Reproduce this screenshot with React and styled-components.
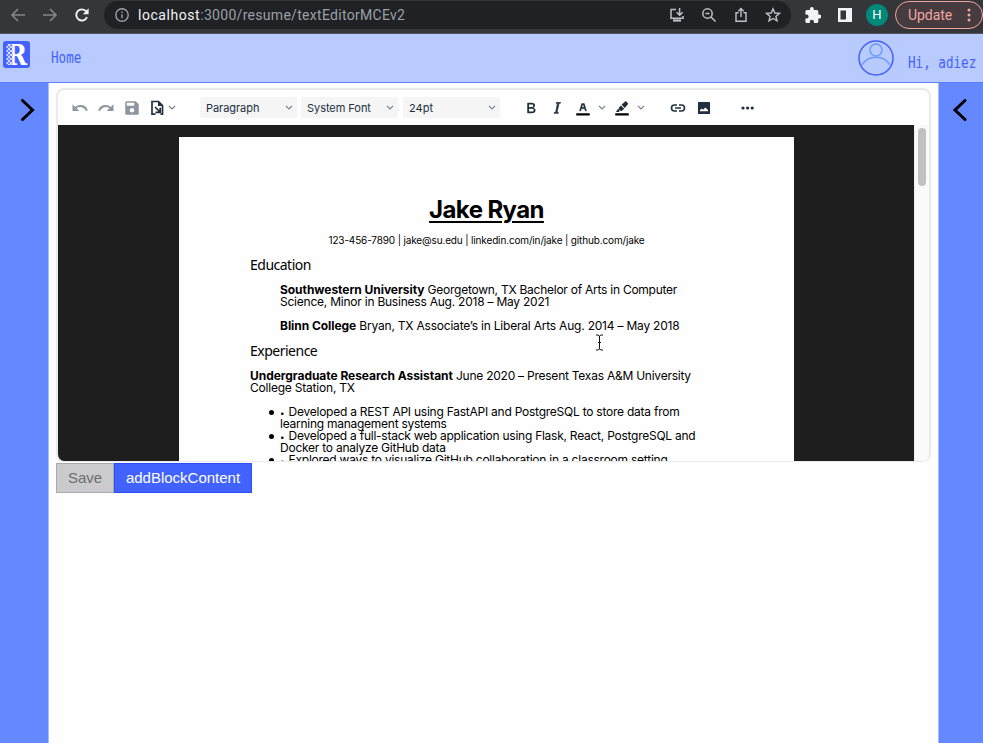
import React from "react";
import styled, { createGlobalStyle } from "styled-components";

const Global = createGlobalStyle`
  * { box-sizing: border-box; }
  html, body { margin: 0; padding: 0; overflow: hidden; }
  svg { display: block; flex: none; }
`;

const Window = styled.div`
  width: 983px;
  height: 743px;
  display: flex;
  flex-direction: column;
  background: #fefefe;
  overflow: hidden;
  font-family: Inter, sans-serif;
`;

/* Browser chrome */
const Chrome = styled.div`
  height: 34px;
  flex: none;
  display: flex;
  align-items: flex-start;
  background: #35363a;
  border-bottom: 1px solid #55565c;
`;
const NavIcons = styled.div`
  width: 104px;
  height: 30px;
  display: flex;
  align-items: center;
  gap: 16px;
  padding-left: 10px;
`;
const AddressBar = styled.div`
  width: 687px;
  height: 28px;
  margin-top: 1px;
  border-radius: 14px;
  background: #202124;
  display: flex;
  align-items: center;
  padding: 0 10px 0 10px;
`;
const Url = styled.div`
  flex: 1;
  margin-left: 8px;
  font: 14px/28px Roboto, sans-serif;
  letter-spacing: ${(p) => p.$ls}px;
  color: #9aa0a6;
  white-space: nowrap;
`;
const Host = styled.span`
  color: #f1f3f4;
  letter-spacing: 0.55px;
`;
const BarIcons = styled.div`
  display: flex;
  align-items: center;
  gap: 16px;
`;
const ChromeRight = styled.div`
  flex: 1;
  height: 30px;
  display: flex;
  align-items: center;
  padding-left: 14px;
`;
const Badge = styled.div`
  width: 22px;
  height: 22px;
  margin: 0 7px 0 14px;
  border-radius: 50%;
  background: #00897b;
  color: #fff;
  font: 13px/22px Roboto, sans-serif;
  text-align: center;
`;
const Update = styled.div`
  width: 88px;
  height: 28px;
  flex: none;
  display: flex;
  align-items: center;
  justify-content: space-between;
  padding: 0 11px 0 12px;
  border: 1px solid #f0a6a0;
  border-radius: 14px;
  background: #463c40;
  color: #f0a6a0;
  font: 14px Roboto, sans-serif;
  letter-spacing: -0.05px;
`;

/* Site header */
const Header = styled.header`
  height: 49px;
  flex: none;
  display: flex;
  align-items: flex-start;
  background: #b9caff;
  border-bottom: 1px solid #6080fa;
  padding: 7px 0 0 3px;
`;
const NavText = styled.div`
  width: ${(p) => p.$w}px;
  margin: ${(p) => p.$m};
  white-space: pre;
  font: 15px/18px "DejaVu Sans Mono", monospace;
  color: #4262ff;
  transform: scaleX(0.84);
  transform-origin: 0 0;
`;
const Spacer = styled.div`
  flex: 1;
`;
const UserIcon = styled.div`
  margin-top: -2px;
`;

/* Page body */
const Body = styled.div`
  flex: 1;
  display: flex;
  min-height: 0;
`;
const Side = styled.aside`
  width: ${(p) => p.$w}px;
  flex: none;
  background: #6488ff;
  border-${(p) => p.$edge}: 1px solid #a9bcff;
  padding: 16px 0 0 ${(p) => p.$pl}px;
`;
const Main = styled.main`
  flex: 1;
  padding: 5px 7px 0 7px;
`;
const Editor = styled.section`
  width: 875px;
  height: 374px;
  display: flex;
  flex-direction: column;
  border: 1px solid #eaeaea;
  border-width: 2px 2px 1px 2px;
  border-radius: 8px;
  overflow: hidden;
`;
const Toolbar = styled.div`
  height: 35px;
  flex: none;
  display: flex;
  align-items: center;
  padding-left: 13px;
  color: #222f3e;
`;
const Slot = styled.div`
  width: ${(p) => p.$w}px;
  flex: none;
  opacity: ${(p) => (p.$off ? 0.5 : 1)};
`;
const Select = styled.div`
  width: 97px;
  height: 21px;
  flex: none;
  margin-right: ${(p) => p.$mr}px;
  display: flex;
  align-items: center;
  justify-content: space-between;
  padding: 0 4px 0 6px;
  border-radius: 3px;
  background: #f5f5f6;
  font-size: 11px;
  letter-spacing: ${(p) => p.$ls}px;
`;
const Canvas = styled.div`
  flex: 1;
  display: flex;
  min-height: 0;
`;
const Dark = styled.div`
  width: 856px;
  background: #1e1e1e;
  padding: 12px 0 0 121px;
  overflow: hidden;
`;
const Scroll = styled.div`
  flex: 1;
  background: #fafafa;
  border-left: 1px solid #eee;
  padding: 3px 0 0 3px;
`;
const Thumb = styled.div`
  width: 8px;
  height: 58px;
  border-radius: 4px;
  background: #c1c1c1;
`;
const Paper = styled.article`
  width: 615px;
  height: 700px;
  background: #fefefe;
  color: #000;
  padding: 58px 71px 0;
  font-size: 12px;
  line-height: 12px;
`;
const Name = styled.h1`
  margin: 0;
  font-size: 24px;
  line-height: 30px;
  font-weight: 700;
  text-align: center;
  text-decoration: underline;
  text-decoration-thickness: 2px;
  text-underline-offset: 3px;
  letter-spacing: ${(p) => p.$ls}px;
`;
const Contact = styled.p`
  margin: 9px 0 0;
  text-align: center;
  font-size: 10px;
  line-height: 12px;
  letter-spacing: ${(p) => p.$ls}px;
`;
const Section = styled.h2`
  margin: ${(p) => p.$m};
  font: 400 14px/16px "Noto Sans", sans-serif;
  letter-spacing: ${(p) => p.$ls}px;
`;
const Entry = styled.div`
  margin-left: ${(p) => (p.$in ? 30 : 0)}px;
  margin-bottom: ${(p) => p.$mb || 0}px;
`;
const Line = styled.div`
  height: 12px;
  white-space: nowrap;
  letter-spacing: ${(p) => p.$ls || 0}px;
`;
const Strong = styled.b`
  letter-spacing: -0.05px;
`;
const Bullets = styled.ul`
  margin: 0;
  padding-left: 19px;
  list-style: none;
`;
const Item = styled.li`
  display: flex;
  &::before {
    content: "";
    width: 5px;
    height: 5px;
    margin: 4px 6px 0 0;
    border-radius: 50%;
    background: #000;
  }
`;
const Dot = styled.span`
  display: inline-block;
  width: 8.5px;
  font-size: 8px;
`;

const Cursor = styled.div`
  position: absolute;
  left: 595px;
  top: 334px;
`;

const Actions = styled.div`
  display: flex;
  margin-top: 1px;
`;
const Button = styled.button`
  width: ${(p) => p.$w}px;
  height: 30px;
  padding: 0 0 1px;
  border: 1px solid ${(p) => (p.$off ? "#aaaaac" : "#2c4ef5")};
  background: ${(p) => (p.$off ? "#cbcbcd" : "#4262ff")};
  color: ${(p) => (p.$off ? "#6d6d70" : "#fff")};
  font: 15px "Liberation Sans", Arial, sans-serif;
  letter-spacing: ${(p) => p.$ls}px;
`;

const Stroke = ({ w = 16, h = 16, vb = "0 0 16 16", sw = 1.6, c = "currentColor", children }) => (
  <svg width={w} height={h} viewBox={vb} fill="none" stroke={c} strokeWidth={sw}>
    {children}
  </svg>
);
const Caret = () => (
  <Stroke w={8} h={6} vb="0 0 8 6" sw={1.1} c="#7c838c">
    <path d="M1 1l3 3 3-3" />
  </Stroke>
);
const Solid = ({ w = 18, h = 18, vb = "0 0 24 24", children }) => (
  <svg width={w} height={h} viewBox={vb} fill="currentColor">
    {children}
  </svg>
);

export default function App() {
  return (
    <Window>
      <Global />
      <Chrome>
        <NavIcons>
          <Stroke c="#85878b"><path d="M15 8H2M8 2L2 8l6 6" /></Stroke>
          <Stroke c="#85878b"><path d="M1 8h13M8 2l6 6-6 6" /></Stroke>
          <Stroke c="#f1f3f4" sw={1.9}>
            <path d="M13 10.2A5.6 5.6 0 1 1 12.2 4.4" />
            <path d="M14.6 1.2v6H8.8z" fill="#f1f3f4" stroke="none" />
          </Stroke>
        </NavIcons>
        <AddressBar>
          <Stroke c="#9aa0a6" sw={1.4}>
            <circle cx="8" cy="8" r="6.2" />
            <path d="M8 7.2v4M8 4.4v1.5" />
          </Stroke>
          <Url $ls={0.3}>
            <Host>localhost</Host>:3000/resume/textEditorMCEv2
          </Url>
          <BarIcons>
            <Stroke c="#bdc1c6" sw={1.5}>
              <path d="M7 2.5H2v8.800h12V9M10.600 1v7M7.600 5.200l3 3 3-3" />
              <path d="M4 13.500h8" strokeWidth="2.200" />
            </Stroke>
            <Stroke c="#bdc1c6" sw={1.5}>
              <circle cx="6.5" cy="6.5" r="4.7" /><path d="M10 10l4.5 4.5M4.5 6.5h4" />
            </Stroke>
            <Stroke c="#bdc1c6" sw={1.4}>
              <path d="M5.5 5.8H3v8.5h10V5.8h-2.500M8 10V1.800M5.300 4.200L8 1.500l2.700 2.700" />
            </Stroke>
            <Stroke c="#bdc1c6" sw={1.4}>
              <path d="M8 1.800l1.800 4.200 4.600.4-3.500 3 1.100 4.500L8 11.500l-4 2.400 1.100-4.500-3.500-3 4.600-.4z" />
            </Stroke>
          </BarIcons>
        </AddressBar>
        <ChromeRight>
          <svg width="16" height="16" viewBox="1.500 1 21 21" fill="#f1f3f4">
            <path d="M20.500 11H19V7a2 2 0 0 0-2-2h-4V3.500a2.500 2.500 0 0 0-5 0V5H4a2 2 0 0 0-2 2v3.800h1.500a2.700 2.700 0 0 1 0 5.400H2V20a2 2 0 0 0 2 2h3.800v-1.500a2.700 2.700 0 0 1 5.400 0V22H17a2 2 0 0 0 2-2v-4h1.500a2.500 2.500 0 0 0 0-5z" />
          </svg>
          <Spacer />
          <svg width="14" height="14" viewBox="0 0 14 14">
            <path d="M0 0h14v14H0zM2.500 2.500v9H8v-9z" fill="#f1f3f4" fillRule="evenodd" />
          </svg>
          <Badge>H</Badge>
          <Update>
            Update
            <svg width="4" height="14" viewBox="0 0 4 14" fill="#f0a6a0">
              <circle cx="2" cy="2" r="1.500" /><circle cx="2" cy="7" r="1.500" /><circle cx="2" cy="12" r="1.500" />
            </svg>
          </Update>
        </ChromeRight>
      </Chrome>

      <Header>
        <svg width="27" height="27" viewBox="0 0 27 27">
          <defs>
            <pattern id="lace" width="4" height="4" patternUnits="userSpaceOnUse">
              <rect width="4" height="4" fill="#4262ff" />
              <circle cx="2" cy="2" r="1.500" fill="none" stroke="#fff" strokeWidth=".9" />
            </pattern>
          </defs>
          <rect width="27" height="27" rx="3" fill="#4262ff" />
          <text x="3.500" y="23.500" fontFamily="DejaVu Serif" fontWeight="bold" fontSize="27" textLength="20.500" lengthAdjust="spacingAndGlyphs" fill="#fff">R</text>
          <rect x="3.500" y="3.500" width="6" height="20" fill="url(#lace)" />
        </svg>
        <NavText $w={40} $m="8px 0 0 21px">Home</NavText>
        <Spacer />
        <UserIcon>
          <svg width="38" height="38" viewBox="0 0 38 38" fill="none">
            <circle cx="19" cy="11" r="6" stroke="#6c9cff" strokeWidth="1.500" />
            <path d="M5 26c6-10.500 22-10.500 28 0" stroke="#6c9cff" strokeWidth="1.500" />
            <circle cx="19" cy="19" r="17" stroke="#4262ff" strokeWidth="1.500" />
          </svg>
        </UserIcon>
        <NavText $w={75} $m="13px 0 0 13px">Hi, adiez</NavText>
      </Header>

      <Body>
        <Side $w={49} $edge="right" $pl={20}>
          <Stroke w={15} h={22} vb="0 0 15 22" sw={3} c="#000"><path d="M2.500 1.500L12.500 11l-10 9.500" strokeLinecap="round" /></Stroke>
        </Side>
        <Main>
          <Editor>
            <Toolbar>
              <Slot $w={26} $off>
                <Solid><path d="M12.500 8c-2.600 0-5 1-6.900 2.600L2 7v9h9l-3.600-3.600A8 8 0 0 1 20 16l2.400-.8A10.500 10.500 0 0 0 12.500 8z" /></Solid>
              </Slot>
              <Slot $w={26} $off>
                <Solid><path d="M11.500 8c2.600 0 5 1 6.900 2.600L22 7v9h-9l3.600-3.600A8 8 0 0 0 4 16l-2.400-.8A10.500 10.500 0 0 1 11.500 8z" /></Solid>
              </Slot>
              <Slot $w={27} $off>
                <Solid><path d="M5 3h12l4 4v12a2 2 0 0 1-2 2H5a2 2 0 0 1-2-2V5a2 2 0 0 1 2-2zm0 2v4h10V5zm7 7a3 3 0 1 0 0 6 3 3 0 0 0 0-6z" fillRule="evenodd" /></Solid>
              </Slot>
              <Slot $w={18}>
                <Stroke w={14} h={16} vb="0 0 14 16" sw={1.7}>
                  <path d="M5.500 14.200H2V1.500h6.500l4 4v8.700h-2" />
                  <path d="M5 7l5 5M10.200 7.800v4.500H5.500" />
                  <path d="M8 1v5h5z" fill="currentColor" stroke="none" />
                </Stroke>
              </Slot>
              <Slot $w={32}><Caret /></Slot>
              <Select $ls={-0.05} $mr={4}>Paragraph<Caret /></Select>
              <Select $ls={-0.05} $mr={5}>System Font<Caret /></Select>
              <Select $ls={0} $mr={22}>24pt<Caret /></Select>
              <Slot $w={26}>
                <Solid><path d="M7.800 19c-.3 0-.5 0-.6-.2l-.2-.5V5.700c0-.2 0-.4.200-.5l.6-.2h5c1.500 0 2.700.3 3.500 1 .7.600 1.100 1.400 1.100 2.500a3 3 0 0 1-.6 1.900c-.4.600-1 1-1.600 1.200.4.100.9.300 1.300.6s.8.700 1 1.200c.4.400.5 1 .5 1.600 0 1.300-.4 2.300-1.300 3-.8.700-2.100 1-3.800 1zm5-8.300c.6 0 1.200-.1 1.600-.5.400-.3.6-.7.600-1.300 0-1.100-.8-1.700-2.300-1.700H9.300v3.500zm.5 6c.7 0 1.300-.1 1.700-.4.400-.4.600-.9.600-1.500s-.2-1-.7-1.400c-.4-.3-1-.4-2-.4H9.400v3.800z" fillRule="evenodd" /></Solid>
              </Slot>
              <Slot $w={26}>
                <Solid><path d="M16.700 4.700l-.1.900h-.3c-.6 0-1 0-1.400.3-.3.300-.4.600-.5 1.100l-2.100 9.800v.6c0 .5.400.8 1.400.8h.2l-.2.800H8l.2-.8h.2c1.100 0 1.800-.5 2-1.500l2-9.800.1-.5c0-.6-.4-.8-1.400-.8h-.3l.2-.9z" stroke="currentColor" /></Solid>
              </Slot>
              <Slot $w={24}>
                <Solid><path d="M3 19h18v3H3z" fill="#000" /><path d="M8.700 16h-.8a.5.500 0 0 1-.5-.6l2.700-9c.1-.3.300-.4.500-.4h2.800c.2 0 .4.100.5.400l2.700 9a.5.500 0 0 1-.5.600h-.8a.5.500 0 0 1-.4-.4l-.7-2.200c0-.3-.3-.4-.5-.4h-3.400c-.2 0-.4.100-.5.400l-.7 2.200c0 .3-.2.400-.4.400zm2.600-7.600l-.6 2a.5.500 0 0 0 .5.600h1.600a.5.500 0 0 0 .5-.6l-.6-2c0-.3-.3-.4-.5-.4h-.4c-.2 0-.4.100-.5.400z" fillRule="evenodd" stroke="currentColor" strokeWidth=".5" /></Solid>
              </Slot>
              <Slot $w={15}><Caret /></Slot>
              <Slot $w={24}>
                <Solid><path d="M3 19h18v3H3z" fill="#000" /><path d="M4 17.300l2.600-4.200 2.500 2.500-1.300 1.700zM7.600 12l2.800-3.500 4.600 4.600-3.500 2.800c-.6.400-1.100.3-1.600-.2l-2.100-2.100c-.5-.5-.6-1-.2-1.600zM11.400 7.500L15.800 3.500c.7-.6 1.500-.6 2.100 0l1.800 1.800c.6.600.6 1.400 0 2.100l-4 4.500z" /></Solid>
              </Slot>
              <Slot $w={33}><Caret /></Slot>
              <Slot $w={27}>
                <Stroke w={16} h={16} sw={1.6}>
                  <path d="M7 5H4.500a3 3 0 0 0 0 6H7M9 5h2.500a3 3 0 0 1 0 6H9M5 8h6" />
                </Stroke>
              </Slot>
              <Slot $w={43}>
                <svg width="14" height="14" viewBox="0 0 14 14" fill="#222f3e">
                  <rect x="1" y="1" width="12" height="12" rx=".6" />
                  <path d="M3 10.300V9l1.800-1.500 1.300 1.200L8.300 6.500 11 9v1.300z" fill="#fff" />
                </svg>
              </Slot>
              <Solid w={15} h={6} vb="0 0 15 6">
                <circle cx="3" cy="3" r="1.600" /><circle cx="7.600" cy="3" r="1.600" /><circle cx="12.200" cy="3" r="1.600" />
              </Solid>
            </Toolbar>
            <Canvas>
              <Dark>
                <Paper>
                  <Name $ls={-0.6}>Jake Ryan</Name>
                  <Contact $ls={-0.15}>123-456-7890 | jake@su.edu | linkedin.com/in/jake | github.com/jake</Contact>
                  <Section $m="11px 0 11px" $ls={-0.5}>Education</Section>
                  <Entry $in $mb={12}>
                    <Line $ls={-0.25}><Strong>Southwestern University</Strong> Georgetown, TX Bachelor of Arts in Computer</Line>
                    <Line $ls={-0.23}>Science, Minor in Business Aug. 2018 – May 2021</Line>
                  </Entry>
                  <Entry $in $mb={11}>
                    <Line $ls={-0.21}><Strong>Blinn College</Strong> Bryan, TX Associate’s in Liberal Arts Aug. 2014 – May 2018</Line>
                  </Entry>
                  <Section $m="0 0 11px" $ls={-0.5}>Experience</Section>
                  <Entry $mb={12}>
                    <Line $ls={-0.24}><Strong>Undergraduate Research Assistant</Strong> June 2020 – Present Texas A&amp;M University</Line>
                    <Line $ls={-0.21}>College Station, TX</Line>
                  </Entry>
                  <Bullets>
                    <Item>
                      <div>
                        <Line $ls={-0.24}><Dot>•</Dot>Developed a REST API using FastAPI and PostgreSQL to store data from</Line>
                        <Line $ls={-0.26}>learning management systems</Line>
                      </div>
                    </Item>
                    <Item>
                      <div>
                        <Line $ls={-0.25}><Dot>•</Dot>Developed a full-stack web application using Flask, React, PostgreSQL and</Line>
                        <Line $ls={-0.24}>Docker to analyze GitHub data</Line>
                      </div>
                    </Item>
                    <Item>
                      <div>
                        <Line $ls={-0.24}><Dot>•</Dot>Explored ways to visualize GitHub collaboration in a classroom setting</Line>
                      </div>
                    </Item>
                  </Bullets>
                </Paper>
              </Dark>
              <Scroll><Thumb /></Scroll>
            </Canvas>
          </Editor>
          <Actions>
            <Button $w={58} $off $ls={0}>Save</Button>
            <Button $w={138} $ls={0}>addBlockContent</Button>
          </Actions>
        </Main>
        <Side $w={45} $edge="left" $pl={14}>
          <Stroke w={15} h={22} vb="0 0 15 22" sw={3} c="#000"><path d="M12 1.500L2 11l10 9.500" strokeLinecap="round" /></Stroke>
        </Side>
      </Body>
      <Cursor>
        <Stroke w={9} h={17} vb="0 0 9 17" sw={1} c="#111"><path d="M1 1h2l1.500 1L6 1h2M4.500 2v13M1 16h2l1.500-1L6 16h2M3 8.500h3" /></Stroke>
      </Cursor>
    </Window>
  );
}
